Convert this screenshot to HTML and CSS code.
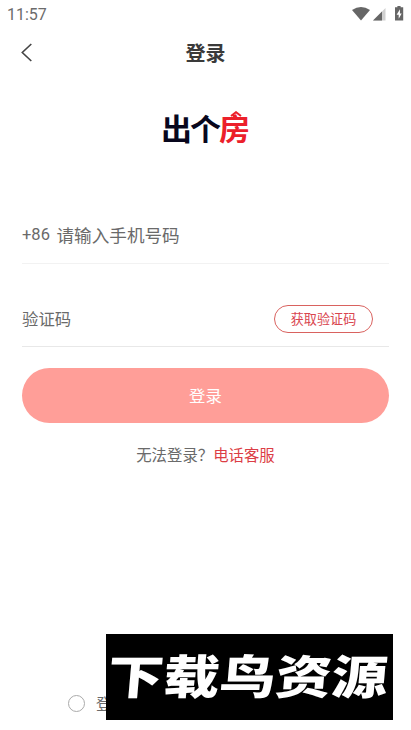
FILE: index.html
```html
<!DOCTYPE html>
<html lang="zh-CN">
<head>
<meta charset="utf-8">
<meta name="viewport" content="width=device-width, initial-scale=1">
<title>登录</title>
<link rel="stylesheet" href="styles.css">
</head>
<body>
<main class="screen">
  <div class="status">
    <span class="clock">11:57</span>
    <svg class="status-icons" width="54" height="20" viewBox="0 0 54 20" aria-hidden="true">
      <path class="solid" d="M0 7Q9 .8 18 7L9 17.5Z"/>
      <path class="faint" d="M33.5 5v12.500H21Z"/>
      <path class="solid" d="M30 8.500v9H21Z"/>
      <path class="solid" d="M45.400 4.300V3h3.200v1.300h2.600V17.500h-8.200V4.300Z"/>
      <path class="bolt" d="M48 6.300l-3.400 5.400h2.100v4.100l3-5.300h-1.800Z"/>
    </svg>
  </div>
  <header class="nav">
    <svg class="back" width="12" height="20" viewBox="0 0 12 20" aria-hidden="true"><path d="M10.300 1 1.300 9.500l9 8.500"/></svg>
    <h1>登录</h1>
  </header>
  <div class="logo">
    <span>出</span><span>个</span><span class="red">房</span>
    <svg class="roof" width="12" height="6" viewBox="0 0 12 6" aria-hidden="true"><path d="M1 5 6 1.200 11 5"/></svg>
  </div>
  <form class="form">
    <div class="field phone"><span class="code">+86</span><span>请输入手机号码</span></div>
    <div class="field verify"><span>验证码</span><button type="button" class="get-code">获取验证码</button></div>
    <button type="button" class="login">登录</button>
  </form>
  <p class="help">无法登录？<a>电话客服</a></p>
  <footer class="agreement"><i class="radio"></i><span>登</span></footer>
  <div class="banner"><span>下载鸟资源</span></div>
</main>
</body>
</html>
```
FILE: styles.css
```css
* { box-sizing: border-box; }
body { margin: 0; background: #fff; }
.screen {
  position: relative;
  display: flex;
  flex-direction: column;
  width: 411px;
  height: 730px;
  overflow: hidden;
  color: #6a6a6a;
  font-family: "Noto Sans CJK SC", sans-serif;
}
button { padding: 0; font-family: inherit; }
.status {
  display: flex;
  justify-content: space-between;
  height: 28px;
  padding: 3px 5px 0 7px;
}
.clock { font: 16px/24px Roboto, sans-serif; color: #6b6b6b; }
.status-icons { display: block; }
.solid { fill: #666; }
.faint { fill: #d0d0d0; }
.bolt { fill: #fff; }
.nav {
  display: grid;
  grid-template-columns: 1fr auto 1fr;
  align-items: center;
  height: 49px;
  padding: 0 21px;
}
.back { fill: none; stroke: #444; stroke-width: 1.6; }
h1 { margin: 0; font-size: 20px; line-height: 28px; font-weight: 700; color: #3a3a3a; }
.logo {
  position: relative;
  display: flex;
  align-self: center;
  height: 36px;
  margin-top: 32px;
  font-size: 31px;
  line-height: 36px;
  font-weight: 700;
  color: #08071d;
}
.logo span {
  width: 29px;
  display: flex;
  justify-content: center;
  transform: scaleY(.97);
}
.logo .red { color: #ec202b; }
.roof {
  position: absolute;
  right: 7px;
  top: 2px;
  fill: none;
  stroke: #ec202b;
  stroke-width: 2;
}
.form { display: flex; flex-direction: column; padding: 0 22px; margin-top: 62px; }
.field { display: flex; align-items: center; }
.phone { height: 57px; padding-bottom: 2px; border-bottom: 1px solid #f2f2f2; font-size: 17.6px; }
.code { width: 34.5px; padding-top: 1px; font: 16.5px/24px Roboto, sans-serif; }
.verify {
  height: 56px;
  margin-top: 27px;
  padding-right: 16px;
  justify-content: space-between;
  border-bottom: 1px solid #e8e8e8;
  font-size: 16.4px;
}
.verify > span { padding-bottom: 2px; }
.get-code {
  width: 99px;
  height: 28px;
  border: 1px solid #d9625f;
  border-radius: 14px;
  background: #fff;
  color: #d9454f;
  font-size: 13.1px;
}
.login {
  height: 55px;
  margin-top: 21px;
  padding-bottom: 2px;
  border: 0;
  border-radius: 28px;
  background: #ff9e98;
  color: #fff;
  font-size: 16.4px;
}
.help { margin: 19px 0 0; text-align: center; font-size: 15.4px; line-height: 24px; }
.help a { color: #dc3d46; }
.agreement {
  display: flex;
  align-items: center;
  gap: 11px;
  height: 24px;
  margin: auto 0 15px 68px;
  font-size: 16px;
}
.radio { width: 17px; height: 17px; border: 1.5px solid #aaa; border-radius: 50%; }
.banner {
  position: absolute;
  left: 106px;
  top: 634px;
  width: 287px;
  height: 86px;
  display: flex;
  align-items: center;
  justify-content: center;
  background: #000;
  color: #fff;
}
.banner span {
  font-size: 56px;
  line-height: 86px;
  font-weight: 900;
  white-space: nowrap;
  transform: translate(-2px, -3px) skewX(-5deg) scaleY(.83);
}
```
